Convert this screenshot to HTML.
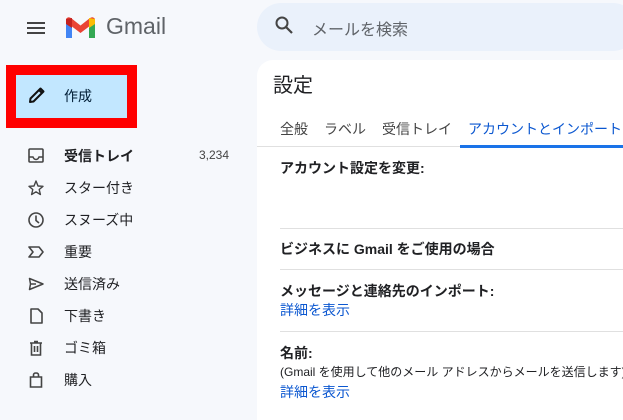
<!DOCTYPE html>
<html><head><meta charset="utf-8"><style>
*{margin:0;padding:0;box-sizing:border-box}
body{width:623px;height:405px;overflow:hidden;background:#f6f8fc;font-family:"Liberation Sans","Noto Sans CJK JP",sans-serif;color:#202124;position:relative}
.a{position:absolute;white-space:nowrap}
.nav{position:absolute;left:0;width:250px;height:32px;font-size:14px}
.nav svg{position:absolute;left:27px;top:7px}
.nav span{position:absolute;left:64px;top:6px}
.sep{position:absolute;left:280px;right:0;height:1px;background:#e0e0e0}
.b{font-weight:bold;font-size:14px}
.lk{color:#0b57d0;font-size:14px}
</style></head><body>
<svg class="a" style="left:26px;top:20px" width="20" height="16" viewBox="0 0 20 16"><rect x="1" y="2" width="18" height="2" fill="#444"/><rect x="1" y="7" width="18" height="2" fill="#444"/><rect x="1" y="12" width="18" height="2" fill="#444"/></svg>
<svg class="a" style="left:65px;top:16px" width="31" height="24" viewBox="0 0 31 24">
<path d="M1 6 V22 H7 V10 Z" fill="#4285f4"/><path d="M24 10 V22 H30 V6 Z" fill="#34a853"/>
<path d="M1 6 L15.5 17 L30 6 L30 3 Q28 0 25 2 L15.5 9.5 L6 2 Q3 0 1 3 Z" fill="#ea4335"/>
<path d="M24 2 L30 3 V8 L24 12 Z" fill="#fbbc04"/><path d="M1 3 L7 2 V12 L1 8 Z" fill="#c5221f"/></svg>
<div class="a" style="left:106px;top:13px;font-size:23px;color:#5f6368">Gmail</div>
<div class="a" style="left:257px;top:3px;width:380px;height:48px;background:#eaf1fb;border-radius:24px"></div>
<svg class="a" style="left:274px;top:15px" width="20" height="20" viewBox="0 0 20 20"><circle cx="8" cy="8" r="5.5" stroke="#444" stroke-width="2" fill="none"/><path d="M12 12 L18 18" stroke="#444" stroke-width="2.2"/></svg>
<div class="a" style="left:312px;top:16px;font-size:16px;color:#5f6368">メールを検索</div>
<div class="a" style="left:6px;top:65px;width:131px;height:63px;background:#f00"></div>
<div class="a" style="left:16px;top:75px;width:111px;height:43px;background:#c2e7ff"></div>
<svg class="a" style="left:27px;top:85px" width="20" height="20" viewBox="0 0 20 20"><path d="M3 17 L3.5 13.5 L13.5 3.5 L16.5 6.5 L6.5 16.5 Z M12 5 L15 8" stroke="#111" stroke-width="2" fill="none" stroke-linejoin="round"/></svg>
<div class="a" style="left:64px;top:86px;font-size:14px;color:#001d35">作成</div>
<div class="nav" style="top:140px"><svg width="18" height="18" viewBox="0 0 18 18"><rect x="2" y="2" width="14" height="13" rx="1" stroke="#444" stroke-width="1.6" fill="none"/><path d="M2 10 H6 Q7 12.5 9 12.5 Q11 12.5 12 10 H16" stroke="#444" stroke-width="1.5" fill="none"/></svg><span style="font-weight:bold">受信トレイ</span><span style="left:199px;font-size:12px;top:8px;color:#444">3,234</span></div>
<div class="nav" style="top:172px"><svg width="18" height="18" viewBox="0 0 18 18"><path d="M9 2 L11 7 L16 7.3 L12.2 10.5 L13.4 15.5 L9 12.8 L4.6 15.5 L5.8 10.5 L2 7.3 L7 7 Z" stroke="#444" stroke-width="1.4" fill="none" stroke-linejoin="round"/></svg><span>スター付き</span></div>
<div class="nav" style="top:204px"><svg width="18" height="18" viewBox="0 0 18 18"><circle cx="9" cy="9" r="7" stroke="#444" stroke-width="1.6" fill="none"/><path d="M9 4.5 V9.5 L12 12" stroke="#444" stroke-width="1.6" fill="none"/></svg><span>スヌーズ中</span></div>
<div class="nav" style="top:236px"><svg width="18" height="18" viewBox="0 0 18 18"><path d="M2 4 H12 L16 9 L12 14 H2 L6 9 Z" stroke="#444" stroke-width="1.6" fill="none" stroke-linejoin="round"/></svg><span>重要</span></div>
<div class="nav" style="top:268px"><svg width="18" height="18" viewBox="0 0 18 18"><path d="M2.5 3.5 L16 9 L2.5 14.5 L3.5 9 Z M3.5 9 H9" stroke="#444" stroke-width="1.5" fill="none" stroke-linejoin="round"/></svg><span>送信済み</span></div>
<div class="nav" style="top:300px"><svg width="18" height="18" viewBox="0 0 18 18"><path d="M4 2 H11 L15 6 V16 H4 Z" stroke="#444" stroke-width="1.6" fill="none" stroke-linejoin="round"/></svg><span>下書き</span></div>
<div class="nav" style="top:332px"><svg width="18" height="18" viewBox="0 0 18 18"><path d="M3 4 H15 M7 2.5 H11 M4.5 4 V16 H13.5 V4 M7.5 7 V13 M10.5 7 V13" stroke="#444" stroke-width="1.6" fill="none"/></svg><span>ゴミ箱</span></div>
<div class="nav" style="top:364px"><svg width="18" height="18" viewBox="0 0 18 18"><path d="M3.5 6 H14.5 V16 H3.5 Z M6.5 6 V4 Q6.5 2 9 2 Q11.5 2 11.5 4 V6" stroke="#444" stroke-width="1.6" fill="none"/></svg><span>購入</span></div>
<div class="a" style="left:257px;top:60px;width:400px;height:360px;background:#fff;border-radius:16px 0 0 0"></div>
<div class="a" style="left:273px;top:69px;font-size:20px">設定</div>
<div class="a" style="left:280px;top:119px;font-size:14px;color:#444">全般</div>
<div class="a" style="left:324px;top:119px;font-size:14px;color:#444">ラベル</div>
<div class="a" style="left:382px;top:119px;font-size:14px;color:#444">受信トレイ</div>
<div class="a" style="left:468px;top:119px;font-size:14px;color:#0b57d0">アカウントとインポート</div>
<div class="a" style="left:257px;top:146px;width:366px;height:1px;background:#e0e0e0"></div>
<div class="a" style="left:460px;top:145px;width:163px;height:3px;background:#1a73e8"></div>
<div class="a b" style="left:280px;top:158px">アカウント設定を変更:</div>
<div class="sep" style="top:228px"></div>
<div class="a b" style="left:280px;top:239px">ビジネスに Gmail をご使用の場合</div>
<div class="sep" style="top:269px"></div>
<div class="a b" style="left:280px;top:281px">メッセージと連絡先のインポート:</div>
<div class="a lk" style="left:280px;top:300px">詳細を表示</div>
<div class="sep" style="top:331px"></div>
<div class="a b" style="left:280px;top:343px">名前:</div>
<div class="a" style="left:280px;top:363px;font-size:12px">(Gmail を使用して他のメール アドレスからメールを送信します)</div>
<div class="a lk" style="left:280px;top:382px">詳細を表示</div>
</body></html>
